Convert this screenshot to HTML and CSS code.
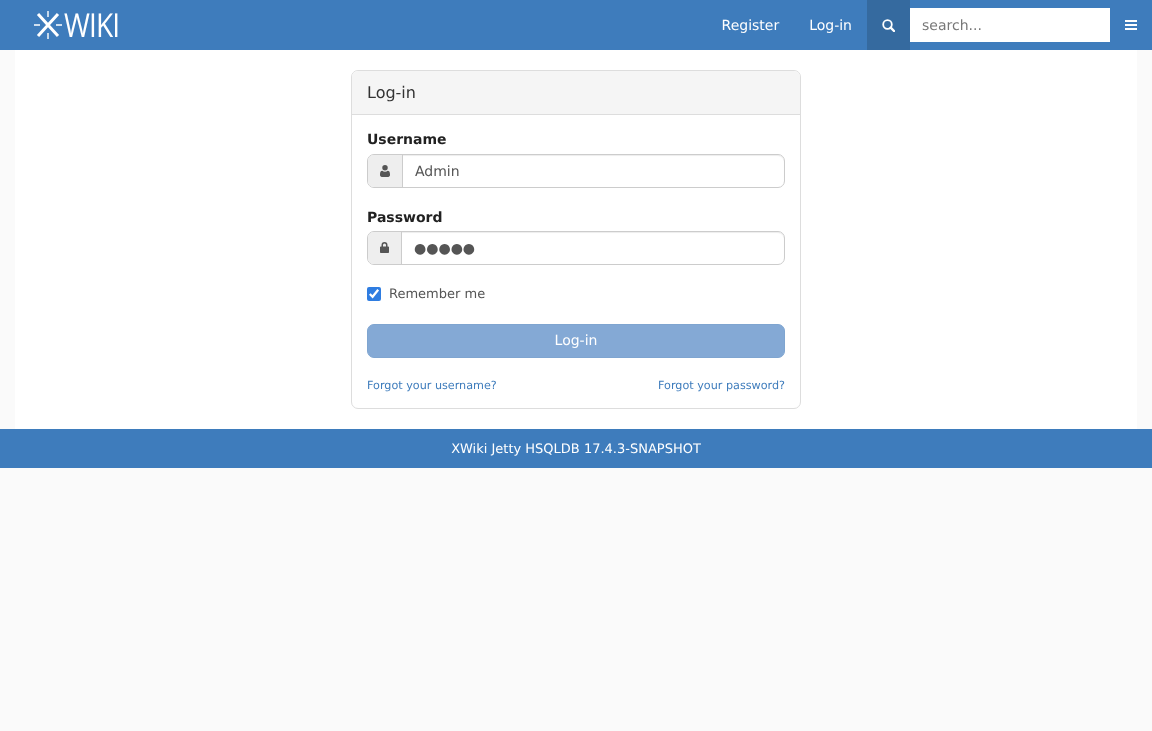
FILE: index.html
```html
<!DOCTYPE html>
<html lang="en">
<head>
<meta charset="utf-8">
<title>Log-in - XWiki</title>
<link rel="stylesheet" href="styles.css">
</head>
<body>
<header class="navbar">
  <a class="brand" href="#">
    <svg class="brand-mark" width="28" height="28" viewBox="0 0 28 28" aria-hidden="true">
      <path class="mark-x" d="M4 3L24 25M24 3L4 25"/>
      <path class="mark-tick" d="M14 0V6M14 22V28M0 14H6M22 14H28"/>
    </svg>
    <span class="brand-text">WIKI</span>
  </a>
  <nav class="nav-links">
    <a class="nav-link" href="#">Register</a>
    <a class="nav-link" href="#">Log-in</a>
  </nav>
  <button class="search-btn" type="button" aria-label="Search">
    <svg width="13" height="13" viewBox="0 0 13 13" aria-hidden="true">
      <circle class="ico-stroke" cx="5.500" cy="5.500" r="4.300"/>
      <path class="ico-handle" d="M8.700 8.700L12 12"/>
    </svg>
  </button>
  <input class="search-input" type="text" placeholder="search...">
  <button class="menu-btn" type="button" aria-label="Menu">
    <svg width="12" height="10" viewBox="0 0 12 10" aria-hidden="true">
      <path class="ico-fill" d="M0 0H12V2H0ZM0 4H12V6H0ZM0 8H12V10H0Z"/>
    </svg>
  </button>
</header>

<main class="content">
  <form class="card">
    <div class="card-head">Log-in</div>
    <div class="card-body">
      <label class="field-label">Username</label>
      <div class="input-group group-user">
        <span class="addon addon-user">
          <svg width="10" height="12" viewBox="0 0 11 13" aria-hidden="true">
            <circle class="ico-dark" cx="5.500" cy="3" r="3"/>
            <path class="ico-dark" d="M0 10C0 7.500 1 6.200 2.500 6.200C3.300 6.800 4.300 7.200 5.500 7.200C6.700 7.200 7.700 6.800 8.500 6.200C10 6.200 11 7.500 11 10V11C11 12.200 10.200 13 9 13H2C0.800 13 0 12.200 0 11Z"/>
          </svg>
        </span>
        <input class="text-input" type="text" value="Admin">
      </div>
      <label class="field-label label-pass">Password</label>
      <div class="input-group group-pass">
        <span class="addon addon-pass">
          <svg width="9" height="11" viewBox="0 0 9 11" aria-hidden="true">
            <path class="ico-dark" d="M1.500 4.500V3A3 3 0 0 1 7.500 3V4.500H8.200C8.700 4.500 9 4.800 9 5.300V10.200C9 10.700 8.700 11 8.200 11H0.800C0.300 11 0 10.700 0 10.200V5.300C0 4.800 0.300 4.500 0.800 4.500ZM3 4.500H6V3A1.500 1.500 0 0 0 3 3Z"/>
          </svg>
        </span>
        <input class="text-input pass-input" type="text" value="●●●●●" aria-label="Password">
      </div>
      <label class="remember">
        <input class="remember-box" type="checkbox" checked>
        <span class="remember-text">Remember me</span>
      </label>
      <button class="submit" type="button">Log-in</button>
      <div class="forgot">
        <a href="#">Forgot your username?</a>
        <a href="#">Forgot your password?</a>
      </div>
    </div>
  </form>
</main>

<footer class="footer">XWiki Jetty HSQLDB 17.4.3-SNAPSHOT</footer>
</body>
</html>
```
FILE: styles.css
```css
* { box-sizing: border-box; }
html, body { margin: 0; padding: 0; }
body {
  background: #fafafa;
  color: #212121;
  font-family: "DejaVu Sans", sans-serif;
  font-size: 14px;
  line-height: 20px;
  text-rendering: geometricPrecision;
  will-change: transform;
}
a { text-decoration: none; }

.navbar {
  display: flex;
  align-items: stretch;
  height: 50px;
  background: #3e7cbc;
}
.brand {
  display: flex;
  align-items: center;
  gap: 2px;
  margin-left: 34px;
  color: #fff;
}
.brand-mark { display: block; flex: none; }
.mark-x { stroke: #fff; stroke-width: 3; fill: none; }
.mark-tick { stroke: #fff; stroke-width: 1.400; fill: none; }
.brand-text {
  display: block;
  transform: scaleX(0.85);
  transform-origin: left center;
  font-family: "Open Sans", sans-serif;
  font-weight: 400;
  font-size: 33px;
  line-height: 50px;
  letter-spacing: -1px;
  color: #fff;
}
.nav-links { display: flex; margin-left: auto; }
.nav-link {
  display: flex;
  align-items: center;
  padding: 2px 15px 0;
  color: #fff;
}
.search-btn {
  display: flex;
  align-items: center;
  justify-content: center;
  width: 43px;
  padding: 0;
  border: 0;
  background: #356a9f;
}
.ico-stroke { fill: none; stroke: #fff; stroke-width: 1.800; }
.ico-handle { fill: none; stroke: #fff; stroke-width: 2.400; stroke-linecap: round; }
.ico-fill { fill: #fff; }
.ico-dark { fill: #555; }
.search-input {
  align-self: center;
  width: 200px;
  height: 34px;
  padding: 2px 12px 0;
  border: 0;
  border-radius: 0;
  background: #fff;
  color: #555;
  font: 14px/20px "DejaVu Sans", sans-serif;
  text-rendering: geometricPrecision;
  outline: 0;
}
.search-input::placeholder { color: #777; opacity: 1; }
.menu-btn {
  display: flex;
  align-items: center;
  justify-content: center;
  width: 42px;
  padding: 0;
  border: 0;
  background: transparent;
}

.content {
  margin: 0 15px;
  padding: 20px 0;
  background: #fff;
  display: flex;
  justify-content: center;
}
.card {
  width: 450px;
  height: 339px;
  border: 1px solid #ddd;
  border-radius: 7px;
  background: #fff;
  overflow: hidden;
}
.card-head {
  height: 44px;
  padding: 0 15px;
  border-bottom: 1px solid #ddd;
  background: #f5f5f5;
  color: #333;
  font-size: 16px;
  line-height: 43px;
}
.card-body { padding: 14px 15px 0; }
.field-label {
  display: block;
  height: 20px;
  font-weight: 700;
  line-height: 22px;
  margin-bottom: 5px;
}
.label-pass { margin-bottom: 4px; }
.input-group {
  display: flex;
  height: 34px;
  border: 1px solid #ccc;
  border-radius: 7px;
  box-shadow: inset 0 1px 1px rgba(0, 0, 0, 0.075);
  overflow: hidden;
  background: #fff;
}
.group-user { margin-bottom: 19px; }
.group-pass { margin-bottom: 22px; }
.addon {
  display: flex;
  align-items: center;
  justify-content: center;
  flex: none;
  border-right: 1px solid #ccc;
  background: #eee;
}
.addon-user { width: 35px; }
.addon-pass { width: 34px; padding-bottom: 1px; }
.text-input {
  flex: 1;
  min-width: 0;
  padding: 2px 12px 0;
  border: 0;
  background: transparent;
  color: #555;
  font: 14px/20px "DejaVu Sans", sans-serif;
  text-rendering: geometricPrecision;
  outline: 0;
}
.pass-input { letter-spacing: 0; }
.remember {
  display: flex;
  align-items: center;
  gap: 8px;
  height: 14px;
  margin-bottom: 23px;
  color: #555;
  font-size: 13px;
}
.remember-text { padding-top: 2px; }
.remember-box {
  width: 14px;
  height: 14px;
  margin: 0;
  accent-color: #2f7de1;
}
.submit {
  display: block;
  width: 100%;
  height: 34px;
  padding: 0;
  border: 1px solid #7fa5d0;
  border-radius: 7px;
  background: #84a9d5;
  color: #fff;
  font: 14px/20px "DejaVu Sans", sans-serif;
  text-rendering: geometricPrecision;
}
.forgot {
  display: flex;
  justify-content: space-between;
  margin-top: 17px;
  font-size: 11.200px;
  line-height: 22px;
}
.forgot a { color: #3e7cbc; }

.footer {
  height: 39px;
  background: #3e7cbc;
  color: #fff;
  font-size: 13px;
  line-height: 41px;
  text-align: center;
}
```
